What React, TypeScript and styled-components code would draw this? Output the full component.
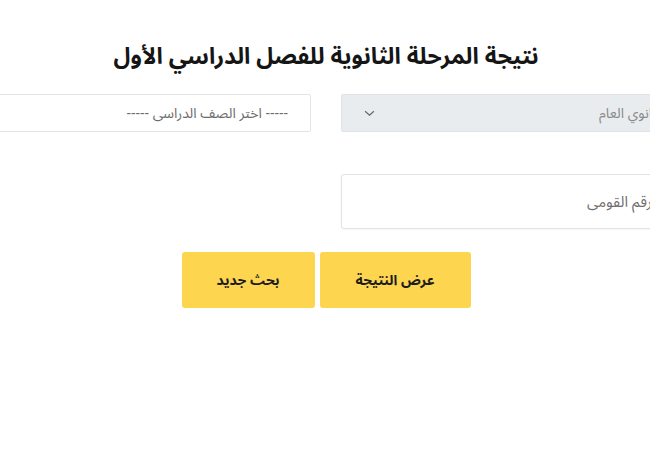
import React from 'react';
import styled, {createGlobalStyle} from 'styled-components';

const GlobalStyle = createGlobalStyle`
    html, body {
        margin: 0;
        padding: 0;
        background: #ffffff;
        overflow: hidden;
    }
    body {
        font-family: "Noto Sans Arabic", "DejaVu Sans", "Noto Sans", sans-serif;
    }
`;

function App() {
    return (
        <>
            <GlobalStyle/>
            <Page>
                <Container dir="rtl">
                    <Title>نتيجة المرحلة الثانوية للفصل الدراسي الأول</Title>
                    <Row>
                        <Col>
                            <Select disabled>
                                <span>الثانوي العام</span>
                                <Chevron viewBox="0 0 12 8">
                                    <path d="M1 1.5 L6 6 L11 1.5" fill="none" stroke="#666" strokeWidth="1.4"/>
                                </Chevron>
                            </Select>
                        </Col>
                        <Col>
                            <Select>
                                <span>----- اختر الصف الدراسى -----</span>
                            </Select>
                        </Col>
                    </Row>
                    <Row>
                        <Col>
                            <Input placeholder="الرقم القومى"/>
                        </Col>
                        <Col/>
                    </Row>
                    <Actions>
                        <Button wide>عرض النتيجة</Button>
                        <Button>بحث جديد</Button>
                    </Actions>
                </Container>
            </Page>
        </>
    );
}

const Page = styled.div`
    width: 652px;
    display: flex;
    justify-content: center;
`;

const Container = styled.div`
    flex: 0 0 760px;
    width: 760px;
    display: flex;
    flex-direction: column;
    align-items: center;
`;

const Title = styled.h1`
    margin: 42px 0 22px;
    font-size: 23px;
    font-weight: 700;
    line-height: 30px;
    color: #151515;
`;

const Row = styled.div`
    width: 100%;
    display: grid;
    grid-template-columns: 1fr 1fr;
    margin-bottom: 43px;
`;

const Col = styled.div`
    padding: 0 15px;
`;

const Select = styled.div<{disabled?: boolean}>`
    height: 38px;
    box-sizing: border-box;
    display: flex;
    align-items: center;
    justify-content: space-between;
    padding: 0 ${p => p.disabled ? '25px' : '22px'} 0 22px;
    border: 1px solid ${p => p.disabled ? '#dfe2e6' : '#e4e4e4'};
    border-radius: 2px;
    background: ${p => p.disabled ? '#e9ecef' : '#ffffff'};
    color: ${p => p.disabled ? '#8a8a8a' : '#6c6c6c'};
    font-size: 14px;
`;

const Chevron = styled.svg`
    width: 11px;
    height: 7px;
`;

const Input = styled.input`
    width: 100%;
    height: 55px;
    box-sizing: border-box;
    margin-top: -1px;
    padding: 0 30px 0 20px;
    border: 1px solid #e3e3e3;
    border-radius: 3px;
    box-shadow: 0 1px 2px rgba(0, 0, 0, 0.04);
    font-family: inherit;
    font-size: 15px;
    color: #333;
    outline: none;
    &::placeholder {
        color: #6f6f6f;
    }
`;

const Actions = styled.div`
    display: flex;
    gap: 5px;
    margin-top: -20px;
`;

const Button = styled.button<{wide?: boolean}>`
    width: ${p => p.wide ? '151px' : '133px'};
    height: 56px;
    border: none;
    border-radius: 3px;
    background: #fed54f;
    color: #1c1c1c;
    font-family: inherit;
    font-size: 14px;
    font-weight: 700;
    cursor: pointer;
`;

export default App;
